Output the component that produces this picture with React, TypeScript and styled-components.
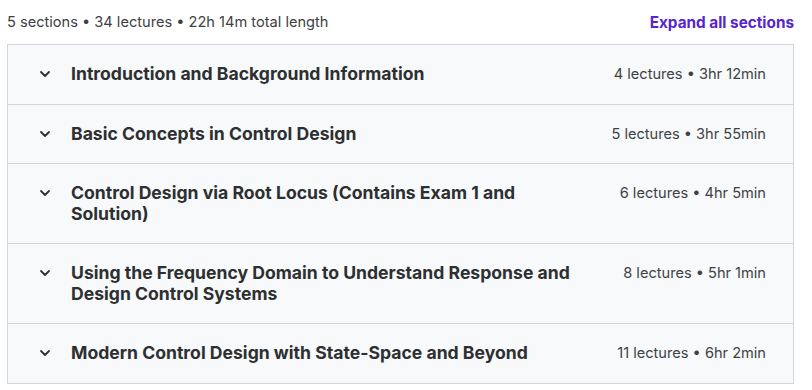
import styled, { createGlobalStyle } from "styled-components";

const sections = [
  { title: "Introduction and Background Information", meta: "4 lectures • 3hr 12min" },
  { title: "Basic Concepts in Control Design", meta: "5 lectures • 3hr 55min" },
  { title: "Control Design via Root Locus (Contains Exam 1 and Solution)", meta: "6 lectures • 4hr 5min" },
  {
    title: "Using the Frequency Domain to Understand Response and Design Control Systems",
    meta: "8 lectures • 5hr 1min",
  },
  { title: "Modern Control Design with State-Space and Beyond", meta: "11 lectures • 6hr 2min" },
];

function Chevron() {
  return (
    <svg width="16" height="16" viewBox="0 0 16 16" fill="none">
      <path d="M4 6 8 10l4-4" stroke="#2d2f31" strokeWidth="1.8" strokeLinecap="round" strokeLinejoin="round" />
    </svg>
  );
}

export default function App() {
  return (
    <>
      <GlobalStyle />
      <Page>
        <Summary>
          <span>5 sections • 34 lectures • 22h 14m total length</span>
          <ExpandButton type="button">Expand all sections</ExpandButton>
        </Summary>
        <Accordion>
          {sections.map((s) => (
            <Section key={s.title}>
              <IconBox>
                <Chevron />
              </IconBox>
              <Title>{s.title}</Title>
              <Meta>{s.meta}</Meta>
            </Section>
          ))}
        </Accordion>
      </Page>
    </>
  );
}

const GlobalStyle = createGlobalStyle`
  body {
    margin: 0;
    background: #fff;
    font-family: Inter, "Noto Sans", sans-serif;
    color: #2d2f31;
  }
`;

const Page = styled.div`
  padding: 0 18px 0 7px;
`;

const Summary = styled.div`
  display: flex;
  justify-content: space-between;
  align-items: center;
  height: 44px;
  font-size: 14.6px;
  color: #3e4143;
`;

const ExpandButton = styled.button`
  border: none;
  background: none;
  padding: 0;
  font-family: inherit;
  font-size: 15.3px;
  font-weight: 700;
  color: #5624d0;
  cursor: pointer;
`;

const Accordion = styled.div`
  border: 1px solid #d1d7dc;
  border-bottom: none;
`;

const Section = styled.div`
  display: flex;
  align-items: flex-start;
  background: #f7f9fa;
  border-bottom: 1px solid #d1d7dc;
  padding: 19px 27px 19px 29px;
`;

const IconBox = styled.div`
  display: flex;
  align-items: center;
  height: 20.5px;
  margin-right: 18px;
  flex-shrink: 0;
`;

const Title = styled.div`
  flex: 1;
  font-size: 17.6px;
  font-weight: 700;
  line-height: 20.5px;
`;

const Meta = styled.div`
  flex-shrink: 0;
  margin-left: 28px;
  font-size: 14.6px;
  line-height: 20.5px;
  color: #3e4143;
  white-space: nowrap;
`;
